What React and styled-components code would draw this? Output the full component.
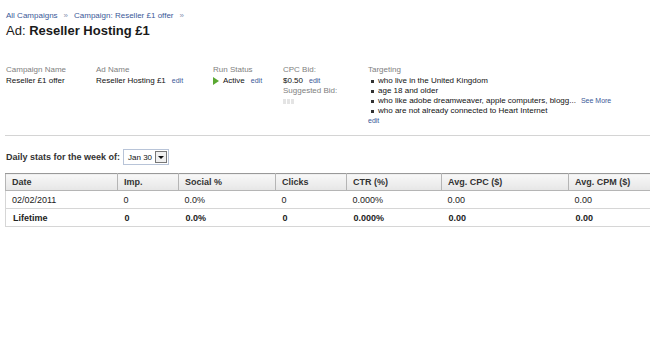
import React from "react";
import styled, { createGlobalStyle } from "styled-components";

const Global = createGlobalStyle`
  html, body { margin: 0; padding: 0; background: #fff; }
  body { font-family: "Liberation Sans", Arial, sans-serif; font-size: 9px; color: #111; }
`;

const Page = styled.div`
  width: 650px;
  height: 360px;
  overflow: hidden;
  padding: 10px 0 0 6px;
  box-sizing: border-box;
`;

const Crumbs = styled.div`
  display: flex;
  gap: 6px;
  color: #3b5998;
  font-size: 8px;
  line-height: 11px;
`;
const Sep = styled.span`color: #8a94b0;`;

const Title = styled.h1`
  margin: 2px 0 0;
  font-size: 13px;
  font-weight: normal;
  line-height: 16px;
  color: #1a1a1a;
  b { font-weight: bold; }
`;

const Info = styled.div`
  display: flex;
  margin-top: 26px;
  height: 67px;
  font-size: 8px;
`;
const Col = styled.div`
  width: ${p => p.$w}px;
  flex: none;
  display: flex;
  flex-direction: column;
  line-height: 10px;
`;
const Label = styled.div`color: #808080; margin-bottom: 1px;`;
const Value = styled.div`
  display: flex;
  align-items: center;
  gap: 6px;
  color: #111;
`;
const Edit = styled.a`
  color: #3b5998;
  font-size: 7px;
  text-decoration: none;
`;
const Play = styled.span`
  width: 0; height: 0;
  border-top: 4px solid transparent;
  border-bottom: 4px solid transparent;
  border-left: 6px solid #5aa832;
  margin-right: -2px;
`;
const Placeholder = styled.div`
  display: flex;
  gap: 1px;
  margin-top: 2px;
  span { width: 3px; height: 5px; background: #e4e4e4; }
`;
const TList = styled.ul`
  list-style: none;
  margin: 0;
  padding: 0 0 0 3px;
  li { display: flex; align-items: center; gap: 4px; height: 10px; white-space: nowrap; }
  li::before { content: ""; width: 3px; height: 3px; background: #333; flex: none; }
`;
const More = styled.a`color: #3b5998; font-size: 7px; margin-left: 1px;`;

const Rule = styled.hr`
  margin: 3px 0 0 -1px;
  border: none;
  border-top: 1px solid #d4d4d4;
  height: 0;
`;

const WeekRow = styled.div`
  display: flex;
  align-items: center;
  gap: 3px;
  margin-top: 13px;
  font-weight: bold;
  color: #333;
`;
const Select = styled.div`
  display: flex;
  align-items: center;
  width: 46px;
  height: 16px;
  box-sizing: border-box;
  border: 1px solid #b8c4d8;
  padding-left: 4px;
  font-weight: normal;
  font-size: 8px;
  white-space: nowrap;
  color: #111;
  justify-content: space-between;
`;
const DropBtn = styled.span`
  width: 12px;
  height: 12px;
  box-sizing: border-box;
  border: 1px solid #777;
  margin-right: 1px;
  background: #f0f0f0;
  display: flex;
  align-items: center;
  justify-content: center;
  &::after {
    content: "";
    border-left: 3px solid transparent;
    border-right: 3px solid transparent;
    border-top: 3px solid #111;
  }
`;

const Table = styled.table`
  margin: 8px 0 0 -1px;
  border-collapse: collapse;
  width: 660px;
  table-layout: fixed;
`;
const Th = styled.th`
  text-align: left;
  font-weight: bold;
  color: #333;
  height: 16px;
  padding: 0 0 0 6px;
  background: linear-gradient(#f8f8f8, #e6e6e6);
  border: 1px solid #b5b5b5;
  border-top-color: #999;
`;
const Td = styled.td`
  height: 17px;
  padding: 0 0 0 ${p => (p.$bold ? 7 : 6)}px;
  font-weight: ${p => (p.$bold ? "bold" : "normal")};
  color: #222;
  border-bottom: 1px solid #d6d6d6;
  &:first-child { border-left: 1px solid #d6d6d6; }
`;

const cols = [112, 61, 97, 71, 95, 127, 97];
const heads = ["Date", "Imp.", "Social %", "Clicks", "CTR (%)", "Avg. CPC ($)", "Avg. CPM ($)"];
const rows = [
  { bold: false, cells: ["02/02/2011", "0", "0.0%", "0", "0.000%", "0.00", "0.00"] },
  { bold: true, cells: ["Lifetime", "0", "0.0%", "0", "0.000%", "0.00", "0.00"] },
];

export default function App() {
  return (
    <Page>
      <Global />
      <Crumbs>
        <span>All Campaigns</span>
        <Sep>»</Sep>
        <span>Campaign: Reseller £1 offer</span>
        <Sep>»</Sep>
      </Crumbs>
      <Title>Ad: <b>Reseller Hosting £1</b></Title>
      <Info>
        <Col $w={90}>
          <Label>Campaign Name</Label>
          <Value>Reseller £1 offer</Value>
        </Col>
        <Col $w={117}>
          <Label>Ad Name</Label>
          <Value>Reseller Hosting £1 <Edit>edit</Edit></Value>
        </Col>
        <Col $w={70}>
          <Label>Run Status</Label>
          <Value><Play />Active <Edit>edit</Edit></Value>
        </Col>
        <Col $w={85}>
          <Label>CPC Bid:</Label>
          <Value>$0.50 <Edit>edit</Edit></Value>
          <Label>Suggested Bid:</Label>
          <Placeholder><span /><span /><span /></Placeholder>
        </Col>
        <Col $w={280}>
          <Label>Targeting</Label>
          <TList>
            <li>who live in the United Kingdom</li>
            <li>age 18 and older</li>
            <li>who like adobe dreamweaver, apple computers, blogg...<More>See More</More></li>
            <li>who are not already connected to Heart Internet</li>
          </TList>
          <Edit>edit</Edit>
        </Col>
      </Info>
      <Rule />
      <WeekRow>
        Daily stats for the week of:
        <Select>Jan 30<DropBtn /></Select>
      </WeekRow>
      <Table>
        <colgroup>
          {cols.map((w, i) => <col key={i} style={{ width: w }} />)}
        </colgroup>
        <thead>
          <tr>{heads.map(h => <Th key={h}>{h}</Th>)}</tr>
        </thead>
        <tbody>
          {rows.map((r, i) => (
            <tr key={i}>
              {r.cells.map((c, j) => <Td key={j} $bold={r.bold}>{c}</Td>)}
            </tr>
          ))}
        </tbody>
      </Table>
    </Page>
  );
}
